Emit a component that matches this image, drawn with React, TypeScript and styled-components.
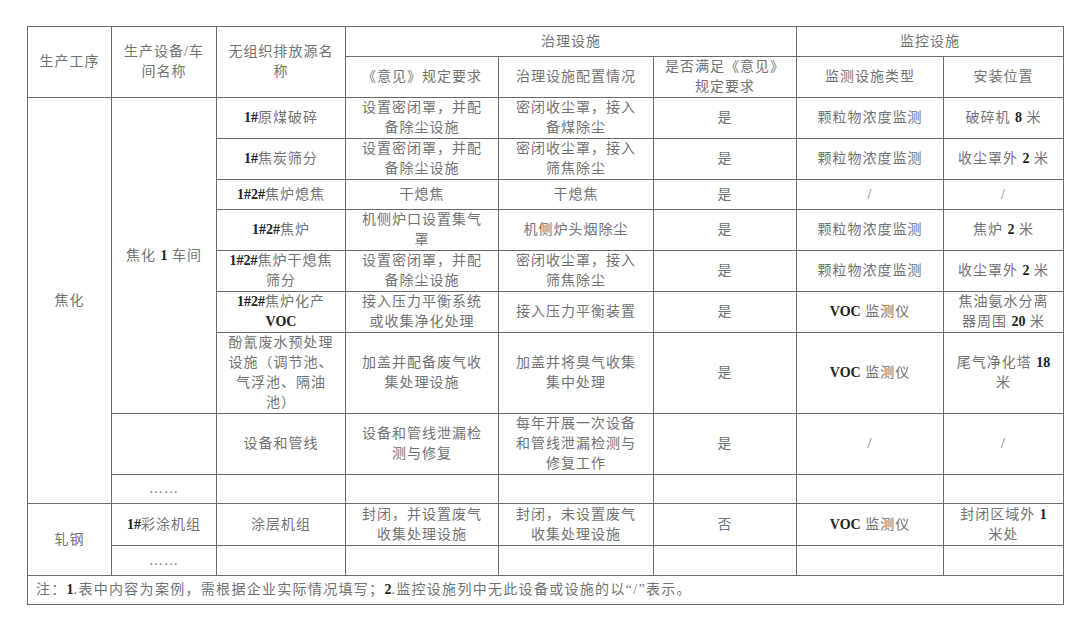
import React from "react";
import styled, { createGlobalStyle } from "styled-components";

const GlobalStyle = createGlobalStyle`
  html, body {
    margin: 0;
    padding: 0;
    background: #ffffff;
  }
  body {
    font-family: "Liberation Serif", "Noto Sans CJK SC", serif;
  }
`;

const Page = styled.div`
  padding: 26px 0 0 27px;
  width: 1080px;
  height: 626px;
  box-sizing: border-box;
`;

const Table = styled.table`
  border-collapse: collapse;
  table-layout: fixed;
  width: 1036px;
  border: 1px solid #6a6a6a;
`;

const Cell = styled.td<{ $left?: boolean }>`
  border: 1px solid #6a6a6a;
  padding: 0 ${(p) => (p.$left ? "8px" : "3px")};
  text-align: ${(p) => (p.$left ? "left" : "center")};
  vertical-align: middle;
  font-family: "Liberation Serif", "Noto Sans CJK SC", serif;
  font-size: 14px;
  line-height: 20px;
  letter-spacing: ${(p) => (p.$left ? "1.3px" : "1px")};
  color: #727272;
  white-space: nowrap;
  overflow: hidden;
`;

const Row = styled.tr<{ $h: number }>`
  height: ${(p) => p.$h}px;
`;

const Num = styled.b`
  font-family: "Liberation Serif", serif;
  font-weight: 700;
  color: #222222;
  letter-spacing: 0;
`;

const colWidths = [84, 105, 129, 153, 155, 143, 147, 120];

// "a|b" -> line break, [x] -> bold number
const render = (s: string) =>
  s.split("|").map((line, i) => (
    <React.Fragment key={i}>
      {i > 0 && <br />}
      {line.split(/(\[[^\]]+\])/).map((part, j) =>
        part.startsWith("[") ? <Num key={j}>{part.slice(1, -1)}</Num> : part
      )}
    </React.Fragment>
  ));

type Item = string | { t: string; rs?: number; cs?: number; left?: boolean };

const rows: { h: number; cells: Item[] }[] = [
  {
    h: 30,
    cells: [
      { t: "生产工序", rs: 2 },
      { t: "生产设备/车|间名称", rs: 2 },
      { t: "无组织排放源名|称", rs: 2 },
      { t: "治理设施", cs: 3 },
      { t: "监控设施", cs: 2 },
    ],
  },
  {
    h: 41,
    cells: ["《意见》规定要求", "治理设施配置情况", "是否满足《意见》|规定要求", "监测设施类型", "安装位置"],
  },
  {
    h: 40,
    cells: [
      { t: "焦化", rs: 9 },
      { t: "焦化 [1] 车间", rs: 7 },
      "[1#]原煤破碎",
      "设置密闭罩，并配|备除尘设施",
      "密闭收尘罩，接入|备煤除尘",
      "是",
      "颗粒物浓度监测",
      "破碎机 [8] 米",
    ],
  },
  {
    h: 41,
    cells: ["[1#]焦炭筛分", "设置密闭罩，并配|备除尘设施", "密闭收尘罩，接入|筛焦除尘", "是", "颗粒物浓度监测", "收尘罩外 [2] 米"],
  },
  { h: 30, cells: ["[1#2#]焦炉熄焦", "干熄焦", "干熄焦", "是", "/", "/"] },
  { h: 40, cells: ["[1#2#]焦炉", "机侧炉口设置集气|罩", "机侧炉头烟除尘", "是", "颗粒物浓度监测", "焦炉 [2] 米"] },
  {
    h: 40,
    cells: ["[1#2#]焦炉干熄焦|筛分", "设置密闭罩，并配|备除尘设施", "密闭收尘罩，接入|筛焦除尘", "是", "颗粒物浓度监测", "收尘罩外 [2] 米"],
  },
  {
    h: 41,
    cells: ["[1#2#]焦炉化产|[VOC]", "接入压力平衡系统|或收集净化处理", "接入压力平衡装置", "是", "[VOC] 监测仪", "焦油氨水分离|器周围 [20] 米"],
  },
  {
    h: 81,
    cells: ["酚氰废水预处理|设施（调节池、|气浮池、隔油|池）", "加盖并配备废气收|集处理设施", "加盖并将臭气收集|集中处理", "是", "[VOC] 监测仪", "尾气净化塔 [18]|米"],
  },
  {
    h: 60,
    cells: ["", "设备和管线", "设备和管线泄漏检|测与修复", "每年开展一次设备|和管线泄漏检测与|修复工作", "是", "/", "/"],
  },
  { h: 29, cells: ["……", "", "", "", "", "", ""] },
  {
    h: 42,
    cells: [
      { t: "轧钢", rs: 2 },
      "[1#]彩涂机组",
      "涂层机组",
      "封闭，并设置废气|收集处理设施",
      "封闭，未设置废气|收集处理设施",
      "否",
      "[VOC] 监测仪",
      "封闭区域外 [1]|米处",
    ],
  },
  { h: 30, cells: ["……", "", "", "", "", "", ""] },
  {
    h: 29,
    cells: [
      {
        t: "注：[1].表中内容为案例，需根据企业实际情况填写；[2].监控设施列中无此设备或设施的以“/”表示。",
        cs: 8,
        left: true,
      },
    ],
  },
];

export default function App() {
  return (
    <>
      <GlobalStyle />
      <Page>
        <Table>
          <colgroup>
            {colWidths.map((w, i) => (
              <col key={i} style={{ width: w }} />
            ))}
          </colgroup>
          <tbody>
            {rows.map((r, i) => (
              <Row key={i} $h={r.h}>
                {r.cells.map((c, j) => {
                  const item = typeof c === "string" ? { t: c } : c;
                  return (
                    <Cell key={j} rowSpan={item.rs} colSpan={item.cs} $left={item.left}>
                      {render(item.t)}
                    </Cell>
                  );
                })}
              </Row>
            ))}
          </tbody>
        </Table>
      </Page>
    </>
  );
}
